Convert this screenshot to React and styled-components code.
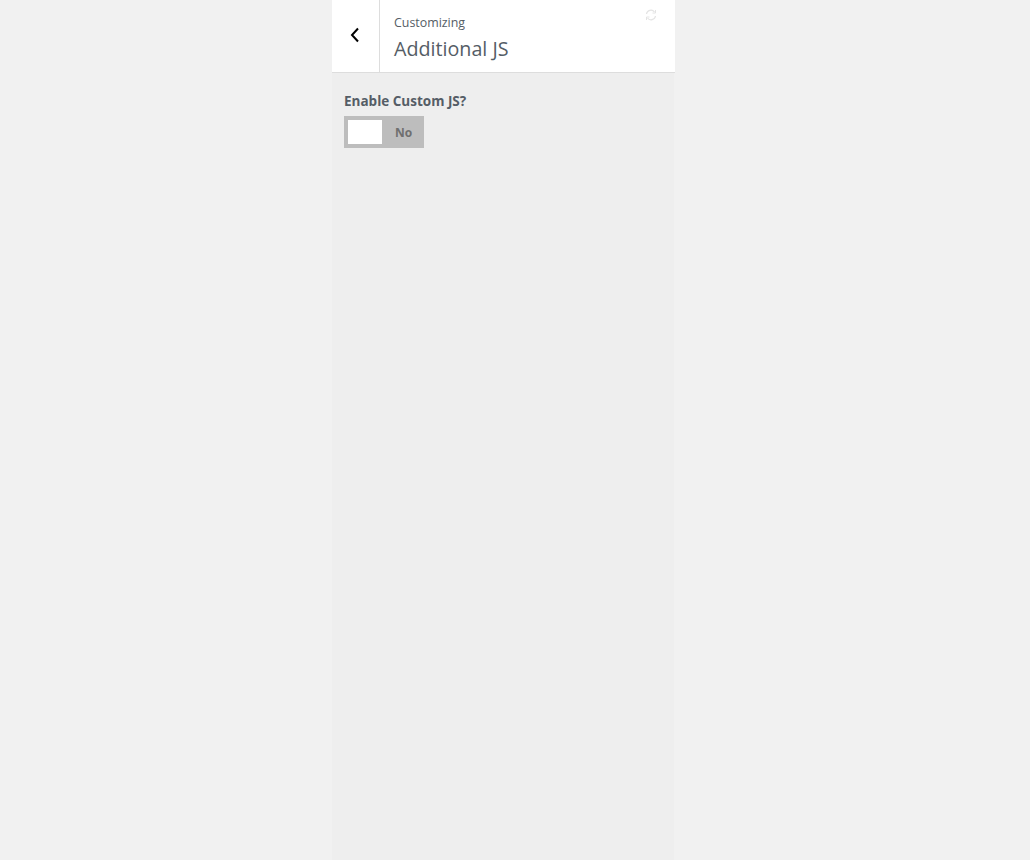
import React from "react";
import styled, { createGlobalStyle } from "styled-components";

const Global = createGlobalStyle`
  html, body { margin: 0; padding: 0; height: 100%; background: #f1f1f1; }
  #root { height: 100%; }
`;

const Page = styled.div`
  width: 1030px;
  height: 860px;
  display: flex;
  justify-content: flex-start;
  padding-left: 332px;
  box-sizing: border-box;
  overflow: hidden;
  font-family: "Open Sans", "Noto Sans", sans-serif;
`;

const Panel = styled.div`
  width: 342px;
  height: 860px;
  background: #eeeeee;
  display: flex;
  flex-direction: column;
`;

const Header = styled.header`
  height: 72px;
  width: 343px;
  background: #ffffff;
  border-bottom: 1px solid #dddddd;
  display: flex;
  position: relative;
  flex: none;
`;

const BackButton = styled.button`
  width: 48px;
  height: 72px;
  flex: none;
  padding: 0 1px 2px 0;
  border: 0;
  border-right: 1px solid #dddddd;
  background: #ffffff;
  display: flex;
  align-items: center;
  justify-content: center;
  box-sizing: border-box;
  color: #000;
`;

const Titles = styled.div`
  padding: 14px 0 0 14px;
  display: flex;
  flex-direction: column;
`;

const Crumb = styled.span`
  font-size: 12.4px;
  line-height: 18px;
  color: #555d66;
`;

const Title = styled.h1`
  margin: 4px 0 0;
  font-size: 19.7px;
  line-height: 26px;
  font-weight: 400;
  color: #555d66;
`;

const Spinner = styled.svg`
  position: absolute;
  top: 9px;
  right: 18px;
`;

const Content = styled.main`
  padding: 19px 12px;
  display: flex;
  flex-direction: column;
`;

const Label = styled.label`
  font-size: 13.5px;
  line-height: 18px;
  font-weight: 700;
  color: #555d66;
  margin-bottom: 6px;
`;

const Toggle = styled.div`
  width: 80px;
  height: 32px;
  background: #bdbdbd;
  display: flex;
  align-items: center;
  padding: 4px;
  box-sizing: border-box;
`;

const Knob = styled.span`
  width: 34px;
  height: 24px;
  background: #ffffff;
  flex: none;
`;

const ToggleText = styled.span`
  flex: 1;
  text-align: center;
  padding-left: 5px;
  font-size: 12px;
  font-weight: 700;
  color: #6f6f6f;
`;

export default function App() {
  return (
    <Page>
      <Global />
      <Panel>
        <Header>
          <BackButton aria-label="Back">
            <svg width="12" height="16" viewBox="0 0 12 16" fill="none">
              <path d="M9 1.5 L3 8 L9 14.5" stroke="#000" strokeWidth="2" />
            </svg>
          </BackButton>
          <Titles>
            <Crumb>Customizing</Crumb>
            <Title>Additional JS</Title>
          </Titles>
          <Spinner width="12" height="12" viewBox="0 0 12 12" fill="none">
            <path d="M1.5 5 A4.5 4.5 0 0 1 9.5 3 M10.5 7 A4.5 4.5 0 0 1 2.5 9" stroke="#e4e4e4" strokeWidth="1.2" />
            <path d="M10.5 1 V4 H7.5 M1.5 11 V8 H4.5" stroke="#e4e4e4" strokeWidth="1" />
          </Spinner>
        </Header>
        <Content>
          <Label>Enable Custom JS?</Label>
          <Toggle>
            <Knob />
            <ToggleText>No</ToggleText>
          </Toggle>
        </Content>
      </Panel>
    </Page>
  );
}
